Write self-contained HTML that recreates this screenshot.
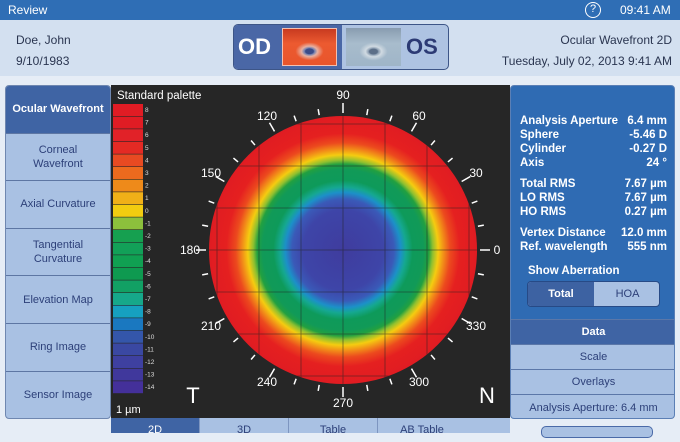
<!DOCTYPE html>
<html><head><meta charset="utf-8"><style>
*{margin:0;padding:0;box-sizing:border-box}
body{width:680px;height:433px;overflow:hidden;background:#e6edf6;font-family:"Liberation Sans",sans-serif;position:relative}
.a{position:absolute}
.top{left:0;top:0;width:680px;height:20px;background:#2f6eb5;color:#fff;font-size:12px}
.hdr{left:0;top:20px;width:680px;height:56px;background:#d3e0f0}
.nav{left:5px;top:85px;width:106px;height:334px;background:#a9c1e3;border:1px solid #6f87b0;border-radius:4px;overflow:hidden}
.nav div{height:47.6px;border-bottom:1px solid #5d76a3;display:flex;align-items:center;justify-content:center;text-align:center;font-size:11px;color:#2c3f78;line-height:14px}
.nav div.s{background:#3f64a4;color:#fff;font-weight:bold}
.rp{left:510px;top:85px;width:165px;height:334px;background:#2f6bb3;border:1px solid #5b7fb5;border-radius:4px;overflow:hidden;color:#fff}
.row{position:absolute;left:9px;width:147px;font-size:11.5px;font-weight:bold;line-height:13px;display:flex;justify-content:space-between;color:#fff}
.tb{position:absolute;left:0;width:165px;height:25px;display:flex;align-items:center;justify-content:center;font-size:11px;border-top:1px solid #5b77a8}
.h{font-size:12px;color:#2a3550}
</style></head><body>
<div class="a top"><span class="a" style="left:8px;top:3px">Review</span>
<span class="a" style="left:585px;top:2px;width:16px;height:16px;border:1.5px solid #fff;border-radius:50%;text-align:center;font-size:11px;line-height:13px">?</span>
<span class="a" style="left:620px;top:3px">09:41 AM</span></div>
<div class="a hdr">
<div class="a h" style="left:16px;top:13px">Doe, John</div>
<div class="a h" style="left:16px;top:34px">9/10/1983</div>
<div class="a h" style="right:8px;top:13px">Ocular Wavefront 2D</div>
<div class="a h" style="right:8px;top:34px">Tuesday, July 02, 2013 9:41 AM</div>
<div class="a" style="left:233px;top:4px;width:216px;height:46px;border:1px solid #3d5587;border-radius:5px;overflow:hidden;background:#aec3e2">
 <div class="a" style="left:0;top:0;width:108px;height:46px;background:#4a67a6"></div>
 <div class="a" style="left:4px;top:9px;font-size:22px;font-weight:bold;color:#fff">OD</div>
 <div class="a" style="left:48px;top:3px;width:55px;height:38px;background:radial-gradient(ellipse 14px 9px at 50% 62%,#3c4c88 0 4px,#7080b0 5px,#e8b0a0 8px,rgba(232,85,44,0) 14px),linear-gradient(#c83a20,#ec5a30 40%,#e8552c);border:1px solid #f4c0b0"></div>
 <div class="a" style="left:112px;top:3px;width:55px;height:38px;background:radial-gradient(ellipse 14px 9px at 50% 62%,#5c6f88 0 4px,#8a9cb0 5px,#d0dae2 8px,rgba(159,181,200,0) 14px),linear-gradient(#889cb0,#a8bccc 40%,#9fb5c8)"></div>
 <div class="a" style="left:172px;top:9px;font-size:22px;font-weight:bold;color:#2c3a74">OS</div>
</div></div>
<div class="a nav">
<div class="s">Ocular Wavefront</div><div>Corneal<br>Wavefront</div><div>Axial Curvature</div><div>Tangential<br>Curvature</div><div>Elevation Map</div><div>Ring Image</div><div style="border:0">Sensor Image</div></div>
<svg class="a" style="left:111px;top:85px" width="399" height="333" viewBox="111 85 399 333">
<defs><radialGradient id="g" cx="343" cy="250" r="134" gradientUnits="userSpaceOnUse">
<stop offset="0" stop-color="#3f3c9e"/><stop offset="0.3" stop-color="#3e45a8"/><stop offset="0.38" stop-color="#3a5ab8"/><stop offset="0.43" stop-color="#1c90c8"/><stop offset="0.47" stop-color="#15a890"/><stop offset="0.52" stop-color="#0e9a5a"/><stop offset="0.6" stop-color="#119a58"/><stop offset="0.64" stop-color="#22a040"/><stop offset="0.67" stop-color="#8fc030"/><stop offset="0.71" stop-color="#f5cc10"/><stop offset="0.75" stop-color="#f29018"/><stop offset="0.8" stop-color="#ec4a1e"/><stop offset="0.87" stop-color="#e52020"/><stop offset="1" stop-color="#e01c22"/></radialGradient>
<clipPath id="c"><circle cx="343" cy="250" r="134"/></clipPath></defs>
<rect x="111" y="85" width="399" height="333" fill="#262626"/>
<circle cx="343" cy="250" r="134" fill="url(#g)"/>
<g clip-path="url(#c)" stroke="#222" stroke-width="0.8" opacity="0.6">
<path d="M217 0V433M259 0V433M301 0V433M343 0V433M385 0V433M427 0V433M469 0V433M0 124H680M0 166H680M0 208H680M0 250H680M0 292H680M0 334H680M0 376H680"/></g>
<g id="ticks" stroke="#fff" stroke-width="1.5"></g>
<g fill="#fff" font-size="12" text-anchor="middle" font-family="Liberation Sans">
<text x="343" y="99">90</text><text x="267" y="120">120</text><text x="419" y="120">60</text><text x="211" y="177">150</text><text x="476" y="177">30</text><text x="190" y="254">180</text><text x="497" y="254">0</text><text x="211" y="330">210</text><text x="476" y="330">330</text><text x="267" y="386">240</text><text x="419" y="386">300</text><text x="343" y="407">270</text>
<text x="117" y="99" text-anchor="start" font-size="11.5">Standard palette</text>
<text x="116" y="413" text-anchor="start" font-size="11">1 µm</text>
<text x="193" y="403" font-size="22">T</text><text x="487" y="403" font-size="22">N</text></g>
<g id="pal"></g>
</svg>
<script>
var t=document.getElementById('ticks'),s='';
for(var a=0;a<360;a+=10){var r=a*Math.PI/180,c=Math.cos(r),n=Math.sin(r),l=(a%30==0)?10:6;
s+='<line x1="'+(343+137*c)+'" y1="'+(250-137*n)+'" x2="'+(343+(137+l)*c)+'" y2="'+(250-(137+l)*n)+'"/>';}
t.innerHTML=s;
var cols=['#e01c24','#e01c24','#e12228','#e42a24','#e84a22','#ec6a1e','#ee8a1a','#f0b018','#f2cc10','#8cc03c','#16a050','#12a058','#10a052','#0e9a50','#12a064','#16a88a','#16a0c0','#1a78c0','#3456aa','#3a48a2','#3e40a0','#40389c','#44309a'],
lb=['8','7','6','5','4','3','2','1','0','-1','-2','-3','-4','-5','-6','-7','-8','-9','-10','-11','-12','-13','-14'],p='';
for(var i=0;i<23;i++){var y=104+i*12.6;p+='<rect x="113" y="'+y+'" width="30" height="12" fill="'+cols[i]+'"/><text x="145" y="'+(y+8)+'" fill="#ddd" font-size="6.5" font-family="Liberation Sans">'+lb[i]+'</text>';}
document.getElementById('pal').innerHTML=p;
</script>
<div class="a rp">
<div class="row" style="top:29px"><span>Analysis Aperture</span><span>6.4 mm</span></div>
<div class="row" style="top:43px"><span>Sphere</span><span>-5.46 D</span></div>
<div class="row" style="top:57px"><span>Cylinder</span><span>-0.27 D</span></div>
<div class="row" style="top:71px"><span>Axis</span><span>24 °</span></div>
<div class="row" style="top:92px"><span>Total RMS</span><span>7.67 µm</span></div>
<div class="row" style="top:106px"><span>LO RMS</span><span>7.67 µm</span></div>
<div class="row" style="top:120px"><span>HO RMS</span><span>0.27 µm</span></div>
<div class="row" style="top:141px"><span>Vertex Distance</span><span>12.0 mm</span></div>
<div class="row" style="top:155px"><span>Ref. wavelength</span><span>555 nm</span></div>
<div class="a" style="left:17px;top:179px;font-size:11.5px;font-weight:bold">Show Aberration</div>
<div class="a" style="left:16px;top:195px;width:133px;height:26px;border:1px solid #274a86;border-radius:4px;overflow:hidden;background:#a9c1e3;font-size:11px">
<div class="a" style="left:0;top:0;width:66px;height:26px;background:#3d62a2;text-align:center;line-height:24px;font-weight:bold">Total</div>
<div class="a" style="left:66px;top:0;width:67px;text-align:center;line-height:24px;color:#2c3f78">HOA</div></div>
<div class="tb" style="top:233px;background:#3f64a4;font-weight:bold;height:25px">Data</div>
<div class="tb" style="top:258px;background:#a9c1e3;color:#2c3f78">Scale</div>
<div class="tb" style="top:283px;background:#a9c1e3;color:#2c3f78">Overlays</div>
<div class="tb" style="top:308px;background:#a9c1e3;color:#2c3f78;height:26px">Analysis Aperture: 6.4 mm</div>
</div>
<div class="a" style="left:111px;top:418px;width:399px;height:15px;background:#a9c1e3;font-size:11px;color:#2c3f78">
<div class="a" style="left:0;top:0;width:88px;height:15px;background:#3f64a4;color:#fff;text-align:center;line-height:24px">2D</div>
<div class="a" style="left:88px;top:0;width:89px;height:15px;text-align:center;line-height:24px;border-left:1px solid #7d95c0">3D</div>
<div class="a" style="left:177px;top:0;width:89px;height:15px;text-align:center;line-height:24px;border-left:1px solid #7d95c0">Table</div>
<div class="a" style="left:266px;top:0;width:89px;height:15px;text-align:center;line-height:24px;border-left:1px solid #7d95c0">AB Table</div></div>
<div class="a" style="left:541px;top:426px;width:112px;height:12px;background:#a9c1e3;border:1.5px solid #4a6aa8;border-radius:5px"></div>
</body></html>
